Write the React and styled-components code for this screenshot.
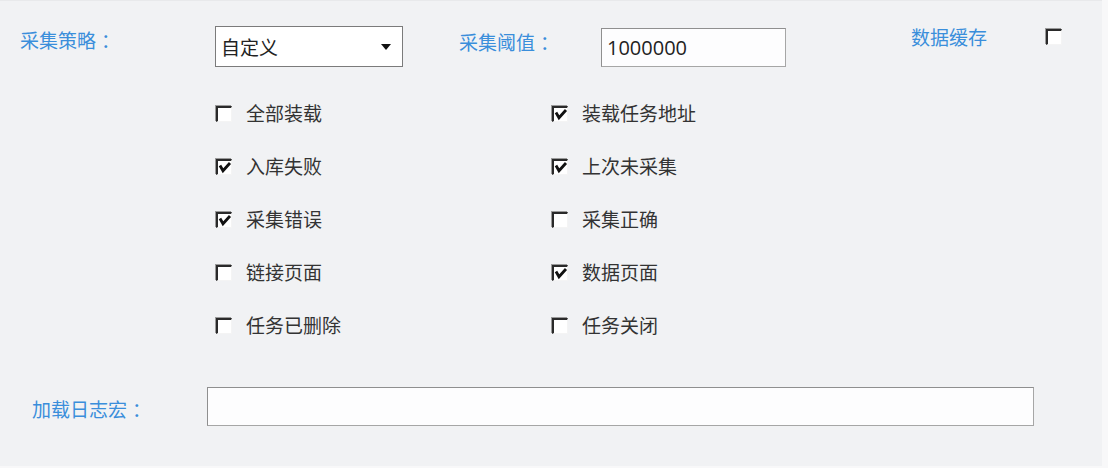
import React from "react";
import styled, { createGlobalStyle } from "styled-components";

const Global = createGlobalStyle`
  html, body { margin: 0; padding: 0; background: #f8f8f9; }
  body { font-family: "Open Sans", "Noto Sans CJK SC", sans-serif; }
`;

const Panel = styled.div`
  width: 1102px;
  height: 466px;
  box-sizing: border-box;
  background: #f1f2f4;
  border-top: 1px solid #e8e9eb;
  padding-top: 25px;
  display: flex;
  flex-direction: column;
`;

const Row = styled.div`
  display: flex;
  align-items: flex-start;
  padding-left: ${(p) => p.$pl}px;
  margin-top: ${(p) => p.$mt || 0}px;
`;

const FieldLabel = styled.span`
  flex: none;
  width: ${(p) => p.$w}px;
  margin-left: ${(p) => p.$ml || 0}px;
  margin-top: ${(p) => p.$mt || 0}px;
  font-size: 19px;
  line-height: 20px;
  color: #3a8edb;
  white-space: pre;
`;

const Select = styled.div`
  flex: none;
  width: 188px;
  height: 41px;
  box-sizing: border-box;
  border: 1px solid #7b7b7b;
  background: #fff;
  display: flex;
  align-items: center;
  justify-content: space-between;
  padding: 0 11px 0 5px;
  font-size: 19px;
  color: #222;
`;

const Caret = styled.span`
  width: 0;
  height: 0;
  border-left: 5px solid transparent;
  border-right: 5px solid transparent;
  border-top: 6px solid #111;
`;

const TextBox = styled.div`
  flex: none;
  width: ${(p) => p.$w}px;
  height: 39px;
  margin-top: ${(p) => p.$mt || 0}px;
  box-sizing: border-box;
  border: 1px solid #a6a6a6;
  border-top-color: #8f8f8f;
  border-left-color: #8f8f8f;
  background: #fdfdfe;
  display: flex;
  align-items: center;
  padding-left: 5px;
  font-size: 20px;
  color: #222;
`;

const Box = styled.span`
  flex: none;
  width: 16px;
  height: 16px;
  box-sizing: border-box;
  margin-top: ${(p) => p.$mt || 0}px;
  background: #fff;
  border-top: 2px solid #2a2a2a;
  border-left: 2px solid #2a2a2a;
  border-right: 1px solid #f4f4f4;
  border-bottom: 1px solid #f4f4f4;
  box-shadow: -1px -1px 0 #9a9a9a;
  display: flex;
  align-items: flex-start;
  justify-content: flex-start;
  overflow: visible;
`;

const Checkbox = ({ checked, mt }) => (
  <Box $mt={mt}>
    {checked && (
      <svg width="14" height="14" viewBox="0 0 14 14" style={{ overflow: "visible" }}>
        <path d="M2 4.5 L5 9.8 L12 2" fill="none" stroke="#111" strokeWidth="2.8" />
      </svg>
    )}
  </Box>
);

const OptionGrid = styled.div`
  display: grid;
  grid-template-columns: 336px 336px;
  grid-auto-rows: 53px;
  padding-left: 216px;
  margin-top: 20px;
`;

const Option = styled.label`
  display: flex;
  align-items: center;
  gap: 14px;
  font-size: 19px;
  line-height: 20px;
  color: #333;
`;

const options = [
  ["全部装载", false],
  ["装载任务地址", true],
  ["入库失败", true],
  ["上次未采集", true],
  ["采集错误", true],
  ["采集正确", false],
  ["链接页面", false],
  ["数据页面", true],
  ["任务已删除", false],
  ["任务关闭", false],
];

export default function App() {
  return (
    <>
      <Global />
      <Panel>
        <Row $pl={20}>
          <FieldLabel $w={195} $mt={5}>采集策略 ：</FieldLabel>
          <Select>
            <span>自定义</span>
            <Caret />
          </Select>
          <FieldLabel $w={142} $ml={56} $mt={7}>采集阈值 ：</FieldLabel>
          <TextBox $w={185} $mt={2}>1000000</TextBox>
          <FieldLabel $w={135} $ml={125} $mt={2}>数据缓存</FieldLabel>
          <Checkbox mt={3} />
        </Row>
        <OptionGrid>
          {options.map(([text, checked]) => (
            <Option key={text}>
              <Checkbox checked={checked} />
              {text}
            </Option>
          ))}
        </OptionGrid>
        <Row $pl={32} $mt={35}>
          <FieldLabel $w={175} $mt={13}>加载日志宏 ：</FieldLabel>
          <TextBox $w={827} />
        </Row>
      </Panel>
    </>
  );
}
